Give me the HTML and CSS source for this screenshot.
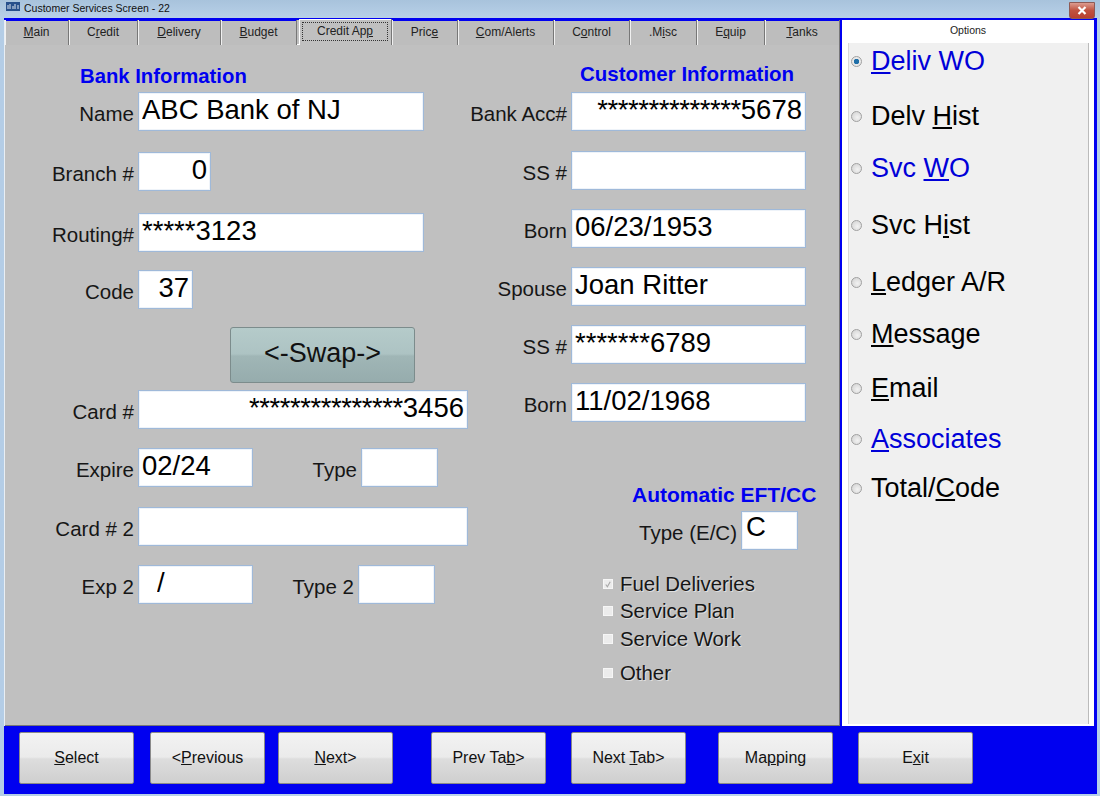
FILE: index.html
```html
<!DOCTYPE html>
<html lang="en">
<head>
    <meta charset="UTF-8">
    <title>Customer Services Screen - 22</title>
    <link rel="stylesheet" href="styles.css">
</head>
<body>
<div class="window">
    <!-- Title bar -->
    <div class="titlebar">
        <span class="app-icon"><svg width="14" height="9" viewBox="0 0 14 9"><rect width="14" height="9" fill="#27508c"/><path d="M2 7V3M4 7V2M7 7V4M9 7V2M12 7V3" stroke="#dfe8f2" stroke-width="1"/></svg></span>
        <span class="title-text">Customer Services Screen - 22</span>
        <span class="close-btn"><svg width="10" height="9" viewBox="0 0 10 9"><path d="M1.5 1 8.5 8M8.5 1 1.5 8" stroke="#fff" stroke-width="2.2"/></svg></span>
    </div>

    <div class="client">
        <div class="top-area">
            <!-- Tabs and form -->
            <div class="main-pane">
                <div class="tabs">
                    <div class="tab"><u>M</u>ain</div>
                    <div class="tab">C<u>r</u>edit</div>
                    <div class="tab"><u>D</u>elivery</div>
                    <div class="tab"><u>B</u>udget</div>
                    <div class="tab active"><span class="focus-box">Credit Ap<u>p</u></span></div>
                    <div class="tab">Pric<u>e</u></div>
                    <div class="tab"><u>C</u>om/Alerts</div>
                    <div class="tab">C<u>o</u>ntrol</div>
                    <div class="tab">.M<u>i</u>sc</div>
                    <div class="tab">E<u>q</u>uip</div>
                    <div class="tab"><u>T</u>anks</div>
                </div>

                <div class="form">
                    <!-- Bank side -->
                    <div class="bank-col">
                        <h2 class="section-title bank-title">Bank Information</h2>
                        <div class="bank-rows">
                            <div class="row"><label class="lbl">Name</label><input class="field w-286" value="ABC Bank of NJ" readonly></div>
                            <div class="row"><label class="lbl">Branch #</label><input class="field w-73 right" value="0" readonly></div>
                            <div class="row"><label class="lbl">Routing#</label><input class="field w-286" value="*****3123" readonly></div>
                            <div class="row"><label class="lbl">Code</label><input class="field w-55 right" value="37" readonly></div>
                            <div class="row"><button class="swap-btn">&lt;-Swap-&gt;</button></div>
                            <div class="row"><label class="lbl">Card #</label><div class="field w-330 right masked"><span class="mask">***************</span>3456</div></div>
                            <div class="row">
                                <label class="lbl">Expire</label><input class="field w-115" value="02/24" readonly>
                                <label class="lbl lbl-type">Type</label><input class="field w-77" readonly>
                            </div>
                            <div class="row"><label class="lbl">Card # 2</label><input class="field w-330" readonly></div>
                            <div class="row">
                                <label class="lbl">Exp 2</label><input class="field w-115 indent" value="/" readonly>
                                <label class="lbl lbl-type2">Type 2</label><input class="field w-77" readonly>
                            </div>
                        </div>
                    </div>

                    <!-- Customer side -->
                    <div class="cust-col">
                        <h2 class="section-title cust-title">Customer Information</h2>
                        <div class="cust-rows">
                            <div class="row"><label class="lbl lbl-cust">Bank Acc#</label><div class="field w-235 right masked"><span class="mask">**************</span>5678</div></div>
                            <div class="row"><label class="lbl lbl-cust">SS #</label><input class="field w-235" readonly></div>
                            <div class="row"><label class="lbl lbl-cust">Born</label><input class="field w-235" value="06/23/1953" readonly></div>
                            <div class="row"><label class="lbl lbl-cust">Spouse</label><input class="field w-235" value="Joan Ritter" readonly></div>
                            <div class="row"><label class="lbl lbl-cust">SS #</label><input class="field w-235" value="*******6789" readonly></div>
                            <div class="row"><label class="lbl lbl-cust">Born</label><input class="field w-235" value="11/02/1968" readonly></div>
                        </div>
                        <h2 class="section-title eft-title">Automatic EFT/CC</h2>
                        <div class="row eft-type">
                            <label class="lbl lbl-eft">Type (E/C)</label><input class="field w-57 top-text" value="C" readonly>
                        </div>
                        <div class="checks">
                            <div class="check-row"><span class="check-box"><svg width="9" height="9" viewBox="0 0 9 9"><path d="M2 4.5 3.8 7 7 1.5" fill="none" stroke="#a8a8a8" stroke-width="1.3"/></svg></span>Fuel Deliveries</div>
                            <div class="check-row"><span class="check-box"></span>Service Plan</div>
                            <div class="check-row"><span class="check-box"></span>Service Work</div>
                            <div class="check-row"><span class="check-box"></span>Other</div>
                        </div>
                    </div>
                </div>
            </div>

            <!-- Options panel -->
            <div class="options">
                <div class="options-head">Options</div>
                <div class="options-list">
                    <div class="opt link"><span class="radio on"></span><span><u>D</u>eliv WO</span></div>
                    <div class="opt"><span class="radio"></span><span>Delv <u>H</u>ist</span></div>
                    <div class="opt link"><span class="radio"></span><span>Svc <u>W</u>O</span></div>
                    <div class="opt"><span class="radio"></span><span>Svc H<u>i</u>st</span></div>
                    <div class="opt"><span class="radio"></span><span><u>L</u>edger A/R</span></div>
                    <div class="opt"><span class="radio"></span><span><u>M</u>essage</span></div>
                    <div class="opt"><span class="radio"></span><span><u>E</u>mail</span></div>
                    <div class="opt link"><span class="radio"></span><span><u>A</u>ssociates</span></div>
                    <div class="opt"><span class="radio"></span><span>Total/<u>C</u>ode</span></div>
                </div>
            </div>
        </div>

        <!-- Bottom buttons -->
        <div class="footer">
            <button class="btn btn-select"><u>S</u>elect</button>
            <button class="btn btn-prev">&lt;<u>P</u>revious</button>
            <button class="btn btn-next"><u>N</u>ext&gt;</button>
            <button class="btn btn-prevtab">Prev Ta<u>b</u>&gt;</button>
            <button class="btn btn-nexttab">Next <u>T</u>ab&gt;</button>
            <button class="btn btn-mapping">Ma<u>p</u>ping</button>
            <button class="btn btn-exit">E<u>x</u>it</button>
        </div>
    </div>
</div>
</body>
</html>
```
FILE: styles.css
```css
* {
    box-sizing: border-box;
}

html, body {
    margin: 0;
    padding: 0;
    overflow: hidden;
}

body {
    font-family: 'Liberation Sans', Arial, sans-serif;
    color: #111;
}

.window {
    width: 1100px;
    height: 796px;
    display: flex;
    flex-direction: column;
    background: linear-gradient(to right, #b4cde6, #bcd3ea 50%, #b6cfe8);
    padding: 0 3px 2px 4px;
}

/* Title bar */
.titlebar {
    height: 18px;
    flex: none;
    display: flex;
    align-items: flex-start;
    background: linear-gradient(to bottom, #a8c3dc, #b8d0e8);
    margin: 0 -3px 0 -4px;
    padding-left: 6px;
    position: relative;
}

.app-icon {
    height: 9px;
    margin-top: 2px;
    display: block;
}

.app-icon svg {
    display: block;
}

.title-text {
    font-size: 10.5px;
    line-height: 17px;
    margin-left: 4px;
    color: #111;
}

.close-btn {
    position: absolute;
    right: 5px;
    top: 2px;
    width: 26px;
    height: 17px;
    display: flex;
    align-items: center;
    justify-content: center;
    background: linear-gradient(to bottom, #dc9c90, #c0523f 50%, #b84030);
    border: 1px solid #8e5a55;
    border-radius: 0 0 3px 3px;
}

.client {
    flex: 1;
    display: flex;
    flex-direction: column;
    border-top: 2px solid #0000f0;
    min-height: 0;
}

.top-area {
    flex: 1;
    display: flex;
    min-height: 0;
}

.main-pane {
    width: 836px;
    display: flex;
    flex-direction: column;
    border-left: 1px solid #e8eef4;
}

/* Tabs */
.tabs {
    height: 25px;
    flex: none;
    display: grid;
    grid-template-columns: 64px 69px 83px 76px 2px 93px 66px 96px 76px 67px 68px 75px;
    background: #c0c0c0;
    border-bottom: 1px solid #fff;
}

.tab {
    font-size: 12px;
    line-height: 25px;
    text-align: center;
    color: #222;
    background: #bdbdbd;
    border-right: 1px solid #777;
    box-shadow: inset 1px 0 0 #f0f0f0, inset 0 1px 0 #0000f0;
}

.tab.active {
    grid-column: 6;
    height: 26px;
    margin-top: -1px;
    background: #c0c0c0;
    box-shadow: inset 1px 0 0 #fff, inset 0 1px 0 #fff;
    padding: 3px 3px 0;
    position: relative;
    z-index: 1;
}

.focus-box {
    display: block;
    height: 19px;
    line-height: 16px;
    border: 1px dotted #333;
}

/* Form */
.form {
    flex: 1;
    display: flex;
    background: #c0c0c0;
    padding-top: 17px;
    border-right: 1px solid #777;
    border-bottom: 1px solid #777;
}

.bank-col {
    width: 463px;
    flex: none;
}

.section-title {
    margin: 0;
    color: #0000f0;
    font-size: 20.3px;
    font-weight: bold;
    line-height: 24px;
}

.bank-title {
    margin: 2px 0 4px 75px;
}

.bank-rows {
    display: grid;
    grid-template-rows: 60px 61px 57px 57px 63px 58px 59px 58px auto;
}

.row {
    display: flex;
    align-items: flex-start;
}

.lbl {
    width: 129px;
    margin-right: 4px;
    flex: none;
    text-align: right;
    font-size: 20.5px;
    line-height: 24px;
    padding-top: 10px;
    color: #161616;
}

.lbl-type {
    width: 104px;
}

.lbl-type2 {
    width: 101px;
}

.lbl-cust {
    width: 99px;
}

.lbl-eft {
    width: 269px;
}

.field {
    height: 39px;
    border: 1px solid #9fb9d9;
    box-shadow: inset 0 0 0 1px #eef3f9;
    background: #fff;
    padding: 0 3px 4px;
    font-family: 'Liberation Sans', Arial, sans-serif;
    font-size: 27.5px;
    color: #000;
    flex: none;
    outline: none;
}

.field.right {
    text-align: right;
}

.field.masked {
    line-height: 33px;
    white-space: nowrap;
}

.mask {
    letter-spacing: -0.45px;
}

.field.indent {
    padding-left: 18px;
}

.field.top-text {
    padding: 0 4px 8px 4px;
}

.w-55 { width: 55px; }
.w-57 { width: 57px; }
.w-73 { width: 73px; }
.w-77 { width: 77px; }
.w-115 { width: 115px; }
.w-235 { width: 235px; }
.w-286 { width: 286px; }
.w-330 { width: 330px; }

.swap-btn {
    width: 185px;
    height: 56px;
    margin-left: 225px;
    font-family: 'Liberation Sans', Arial, sans-serif;
    font-size: 27px;
    color: #111;
    background: linear-gradient(to bottom, #b5cbca 0%, #adc3c3 48%, #a0b6b6 52%, #96acad 100%);
    border: 1px solid #7c8c8c;
    border-radius: 3px;
    padding: 0 0 3px;
}

/* Customer column */
.cust-col {
    flex: 1;
}

.cust-title {
    margin: 0 0 6px 112px;
    font-size: 20.5px;
}

.cust-rows {
    display: grid;
    grid-template-rows: 59px repeat(5, 58px);
}

.eft-title {
    margin: 42px 0 4px 164px;
    font-size: 21px;
}

.checks {
    display: grid;
    grid-template-rows: 27px 28px 34px 24px;
    margin: 22px 0 0 135px;
}

.check-row {
    display: flex;
    align-items: center;
    height: 24px;
    font-size: 20.4px;
    color: #161616;
    text-shadow: 1px 1px 0 rgba(255, 255, 255, 0.5);
}

.check-box {
    width: 10px;
    height: 10px;
    margin-right: 7px;
    background: #ececec;
    border: 1px solid #f6f6f6;
    display: flex;
    align-items: center;
    justify-content: center;
}

/* Options panel */
.options {
    flex: 1;
    display: flex;
    flex-direction: column;
    background: #fff;
    border-left: 2px solid #0000f0;
    border-right: 3px solid #0000f0;
}

.options-head {
    height: 23px;
    flex: none;
    text-align: center;
    font-size: 10.5px;
    line-height: 21px;
    color: #222;
}

.options-list {
    flex: 1;
    margin: 0 5px 2px 6px;
    background: #f0f0f0;
    border-left: 1px solid #d8d8d8;
    border-right: 1px solid #bbb;
    padding: 2px 0 0;
    display: grid;
    grid-template-rows: 55px 52px 57px 57px 52px 54px 51px 49px auto;
}

.opt {
    height: 32px;
    display: flex;
    align-items: center;
    font-size: 27px;
    color: #000;
}

.opt.link {
    color: #0000d8;
}

.radio {
    width: 11px;
    height: 11px;
    margin: 0 9px 0 2px;
    flex: none;
    border-radius: 50%;
    border: 1px solid #a0a0a0;
    background: radial-gradient(circle at 60% 60%, #f2f2f2, #cfcfcf);
}

.radio.on {
    background: radial-gradient(circle, #1f6fa8 0 2.5px, #e8e8e8 3px);
}

/* Footer */
.footer {
    height: 68px;
    flex: none;
    display: flex;
    align-items: flex-start;
    background: #0000f0;
    padding: 6px 0 0 15px;
}

.btn {
    width: 115px;
    height: 52px;
    flex: none;
    font-family: 'Liberation Sans', Arial, sans-serif;
    font-size: 16px;
    color: #111;
    background: linear-gradient(to bottom, #f2f2f2 0%, #ebebeb 48%, #dddddd 52%, #cfcfcf 100%);
    border: 1px solid #8a8a8a;
    border-radius: 2px;
    padding: 0;
}

.btn-prev { margin-left: 16px; }
.btn-next { margin-left: 13px; }
.btn-prevtab { margin-left: 38px; }
.btn-nexttab { margin-left: 25px; }
.btn-mapping { margin-left: 32px; }
.btn-exit { margin-left: 25px; }
```
